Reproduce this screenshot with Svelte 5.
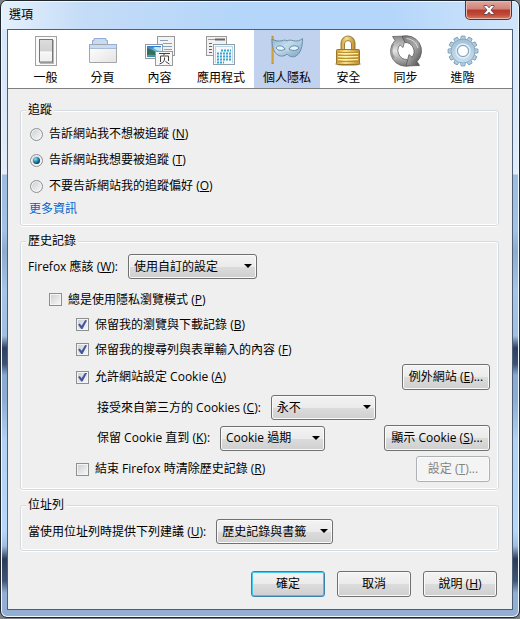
<script>
  const tabs = [
    { id: 'general', label: '一般' },
    { id: 'tabs', label: '分頁' },
    { id: 'content', label: '內容' },
    { id: 'apps', label: '應用程式' },
    { id: 'privacy', label: '個人隱私' },
    { id: 'security', label: '安全' },
    { id: 'sync', label: '同步' },
    { id: 'advanced', label: '進階' }
  ];
  const trackingOptions = [
    { value: 'no', label: '告訴網站我不想被追蹤', key: 'N' },
    { value: 'yes', label: '告訴網站我想要被追蹤', key: 'T' },
    { value: 'none', label: '不要告訴網站我的追蹤偏好', key: 'O' }
  ];
  const teeth = [0, 30, 60, 90, 120, 150, 180, 210, 240, 270, 300, 330];

  let active = $state('privacy');
  let tracking = $state('yes');
  let alwaysPrivate = $state(false);
  let keepHistory = $state(true);
  let keepForms = $state(true);
  let allowCookies = $state(true);
  let clearOnExit = $state(false);
</script>

{#snippet key(letter)}(<u>{letter}</u>){/snippet}

{#snippet icon(id)}
  <svg class="icon" width="32" height="32" viewBox="0 0 32 32" aria-hidden="true">
    {#if id === 'general'}
      <rect x="5.5" y="1.5" width="21" height="29" fill="#fafafa" stroke="#a2a2a2" />
      <rect x="10" y="5" width="14" height="24" fill="#b9b9b9" />
      <rect x="9.5" y="4.5" width="13" height="22.5" fill="url(#switch)" stroke="#777" />
      <path d="M10 17h12" stroke="#fff" />
    {:else if id === 'tabs'}
      <path d="M5.5 11V5.500H7V3.500h12v2h1.500V11z" fill="#c7dbf5" stroke="#93acd0" />
      <path d="M2.500 9.500h27v18h-27z" fill="url(#folder)" stroke="#a5a5a5" />
      <path d="M2.500 12.500v-3h3M20 9.500h9.500v3" fill="none" stroke="#93acd0" />
      <path d="M3 10h26v3H3z" fill="#c7dbf5" />
      <path d="M3 13.500h26" stroke="#a9bdd9" />
    {:else if id === 'content'}
      <rect x="13.5" y="1.5" width="17" height="19" fill="#f3f3f3" stroke="#999" />
      <path d="M16 5.500h8M19 8.500h9M16 11.500h12M20 14.500h8" stroke="#8ca1b8" />
      <rect x="1.5" y="9.5" width="17" height="14" fill="#fff" stroke="#8e9aa5" />
      <rect x="3" y="11" width="14" height="11" fill="url(#photo)" />
      <path d="M3 13c5 1 7 4 14 5v2c-5 1-9-1-14 0z" fill="#346f59" />
      <path d="M9 13c3-2 5 0 8-1v4c-3 0-5-1-8-3z" fill="#c5e8f7" />
      <rect x="11.5" y="16.5" width="17" height="14" fill="#f8f8f8" stroke="#999" />
      <path d="M15 18.500h11M20.500 18.500l-1 2M16.500 27v-6h8v5M20.500 22.500v2.500q-1 3-5 4M21.500 26.500l4 2.500" fill="none" stroke="#444" />
    {:else if id === 'apps'}
      <rect x="1.5" y="1.5" width="20" height="19" fill="#f1f1f1" stroke="#999" />
      <path d="M3 4.500h7M18 4.500h2" stroke="#999" /><path d="M10 4.500h10" stroke="#666" stroke-width="2" />
      <path d="M4 8.500h3M4 11.500h3M4 14.500h3M4 17.500h3" stroke="#666" />
      <rect x="8.5" y="9.5" width="21" height="20" fill="#f5f9fb" stroke="#8ba0ad" />
      <path d="M10 11.500h18M10.500 11v17M27.500 11v17" stroke="#bcd5e2" />
      <path d="M16 15.500h10M12 18.500h14M12 21.500h14M12 24.500h14M12 27.500h7" stroke="#39a4cf" stroke-width="2" stroke-dasharray="2 1" />
    {:else if id === 'privacy'}
      <path d="M1.500 1v28" stroke="#b78a2b" stroke-width="2" /><path d="M1 2v26" stroke="#f7c44c" stroke-width=".8" />
      <path d="M1 4c3 2 7 2.500 10 1.700 2-.7 3.500-.8 5 .2 2-1 4-1 6-.2 4 1 7 0 9.500-2.200C31.500 11 30 18 25 21c-4 2-7 0-9-2-2 2-6 3-9 1C2 17 1 10 1 4z" fill="url(#mask)" stroke="#6a8eab" />
      <path d="M5 13c1-3 7-3 9 1-3 2-7 2-9-1zM18 14c2-4 8-4 10-1-2 3-7 3-10 1z" fill="#e9f3fd" stroke="#5f8caf" />
      <path d="M16 8l-1 8h3z" fill="#c5dceb" opacity=".8" />
    {:else if id === 'security'}
      <path d="M8 17V8a7 7 0 0 1 14 0v9h-3.500V9a3.500 3.500 0 0 0-7 0v8z" fill="url(#brass)" stroke="#806525" stroke-width=".8" />
      <ellipse cx="15" cy="29" rx="13" ry="2" fill="#bbb" />
      <rect x="3.5" y="14.5" width="23" height="15" rx="1" fill="url(#brass)" stroke="#9b7625" />
      <path d="M5 17.500h20M5 20.500h20M5 23.500h20M5 26.500h20" stroke="#bb9238" /><path d="M5 18.500h20M5 21.500h20M5 24.500h20" stroke="#fff1a6" />
    {:else if id === 'sync'}
      <path d="M20 30.500A15 15 0 0 1 5 5.500L2.500 1.500 16 1l-3 11.500-3-2.700A9 9 0 0 0 17 24.500z" fill="url(#metal2)" stroke="#666" stroke-width=".8" />
      <path d="M20 30.500A15 15 0 0 1 5 5.500L2.500 1.500 16 1l-3 11.500-3-2.700A9 9 0 0 0 17 24.500z" transform="rotate(180 16 16)" fill="url(#metal)" stroke="#555" stroke-width=".8" />
      <path d="M3.500 9A14 14 0 0 0 4 23" fill="none" stroke="#666" stroke-width="1.500" opacity=".5" />
      <path d="M16.500 3.500A12.500 12.500 0 0 1 28 13" fill="none" stroke="#f4f4f4" opacity=".7" />
    {:else}
      <g fill="url(#gear)" stroke="#7ba1bd" stroke-width=".8">
        {#each teeth as angle}
          <path d="M13.500 5l.6-4h3.800l.6 4z" transform="rotate({angle} 16 16)" />
        {/each}
        <path fill-rule="evenodd" d="M16 4a12 12 0 1 0 0 24 12 12 0 0 0 0-24zm0 6.500a5.500 5.500 0 1 1 0 11 5.500 5.500 0 0 1 0-11z" />
      </g>
      <circle cx="16" cy="16" r="7" fill="none" stroke="#e2f0fa" stroke-width="1.5" />
      <circle cx="16" cy="16" r="5.5" fill="#fff" stroke="#7ba1bd" />
    {/if}
  </svg>
{/snippet}

<svg class="defs" width="0" height="0" aria-hidden="true">
  <defs>
    <linearGradient id="switch" x2="0" y2="1"><stop stop-color="#ddd" /><stop offset=".55" stop-color="#d0d0d0" /><stop offset=".57" stop-color="#f6f6f6" /><stop offset="1" stop-color="#eee" /></linearGradient>
    <linearGradient id="folder" x2="1" y2="1"><stop stop-color="#fff" /><stop offset="1" stop-color="#e4e4e4" /></linearGradient>
    <linearGradient id="photo" x2="0" y2="1"><stop stop-color="#2875cb" /><stop offset=".5" stop-color="#7cc3ed" /><stop offset="1" stop-color="#3c86a8" /></linearGradient>
    <linearGradient id="mask" x2="1" y2="1"><stop stop-color="#8fb1ca" /><stop offset=".4" stop-color="#c4dcec" /><stop offset="1" stop-color="#7da3c0" /></linearGradient>
    <linearGradient id="brass"><stop stop-color="#cf9f3a" /><stop offset=".4" stop-color="#f7e08d" /><stop offset="1" stop-color="#bd8b2d" /></linearGradient>
    <linearGradient id="metal" x2="1" y2="1"><stop stop-color="#444" /><stop offset=".5" stop-color="#aaa" /><stop offset="1" stop-color="#777" /></linearGradient>
    <linearGradient id="metal2" x2="0" y2="1"><stop stop-color="#888" /><stop offset=".5" stop-color="#e4e4e4" /><stop offset="1" stop-color="#777" /></linearGradient>
    <linearGradient id="gear" x2="0" y2="1"><stop stop-color="#a4bfd3" /><stop offset="1" stop-color="#c9dfed" /></linearGradient>
  </defs>
</svg>

<div class="window">
  <header class="titlebar">
    <h1>選項</h1>
    <button class="close" aria-label="關閉">
      <svg width="12" height="10" viewBox="0 0 12 10" aria-hidden="true">
        <path d="M1 .500h3l2 2.300L8 .500h3v1L8 5l3 3.500v1H8L6 7.200 4 9.500H1v-1L4 5 1 1.500z" fill="#fff" stroke="#4a3b46" stroke-width=".8" />
      </svg>
    </button>
  </header>

  <div class="client">
    <div class="toolbar" role="tablist">
      {#each tabs as tab (tab.id)}
        <button role="tab" class="tab" aria-selected={active === tab.id} onclick={() => (active = tab.id)}>
          {@render icon(tab.id)}
          <span>{tab.label}</span>
        </button>
      {/each}
    </div>

    <main>
      <fieldset class="tracking">
        <legend>追蹤</legend>
        {#each trackingOptions as option (option.value)}
          <label class="radio-row">
            <input type="radio" name="tracking" value={option.value} bind:group={tracking} />
            <span>{option.label} {@render key(option.key)}</span>
          </label>
        {/each}
        <a href="#more">更多資訊</a>
      </fieldset>

      <fieldset class="history">
        <legend>歷史記錄</legend>
        <div class="row">
          <label for="mode">Firefox 應該 {@render key('W')}:</label>
          <span class="dropdown mode"><select id="mode"><option>使用自訂的設定</option></select></span>
        </div>
        <div class="checks">
          <label class="check"><input type="checkbox" bind:checked={alwaysPrivate} /><span>總是使用隱私瀏覽模式 {@render key('P')}</span></label>
          <div class="nested">
            <label class="check"><input type="checkbox" bind:checked={keepHistory} /><span>保留我的瀏覽與下載記錄 {@render key('B')}</span></label>
            <label class="check"><input type="checkbox" bind:checked={keepForms} /><span>保留我的搜尋列與表單輸入的內容 {@render key('F')}</span></label>
            <div class="cookies">
              <div class="row spread">
                <label class="check"><input type="checkbox" bind:checked={allowCookies} /><span>允許網站設定 Cookie {@render key('A')}</span></label>
                <button class="push">例外網站 {@render key('E')}...</button>
              </div>
              <div class="row inset">
                <label for="third">接受來自第三方的 Cookies {@render key('C')}:</label>
                <span class="dropdown short"><select id="third"><option>永不</option></select></span>
              </div>
              <div class="row inset spread">
                <div class="row">
                  <label for="until">保留 Cookie 直到 {@render key('K')}:</label>
                  <span class="dropdown short"><select id="until"><option>Cookie 過期</option></select></span>
                </div>
                <button class="push wide">顯示 Cookie {@render key('S')}...</button>
              </div>
              <div class="row spread">
                <label class="check"><input type="checkbox" bind:checked={clearOnExit} /><span>結束 Firefox 時清除歷史記錄 {@render key('R')}</span></label>
                <button class="push" disabled={!clearOnExit}>設定 {@render key('T')}...</button>
              </div>
            </div>
          </div>
        </div>
      </fieldset>

      <fieldset class="location">
        <legend>位址列</legend>
        <div class="row">
          <label for="suggest">當使用位址列時提供下列建議 {@render key('U')}:</label>
          <span class="dropdown suggest"><select id="suggest"><option>歷史記錄與書籤</option></select></span>
        </div>
      </fieldset>

      <footer>
        <button class="push default">確定</button>
        <button class="push">取消</button>
        <button class="push">說明 {@render key('H')}</button>
      </footer>
    </main>
  </div>
</div>

<style>
  :global(body) {
    background: #7c7f84;
  }
  .defs {
    display: block;
  }
  .window,
  button,
  select {
    font: 12px/18px 'Open Sans', 'Noto Sans CJK TC', sans-serif;
    color: #000;
  }
  .window {
    box-sizing: border-box;
    padding: 0 6px 7px;
    border: 1px solid #20262e;
    border-radius: 7px;
    box-shadow: inset 0 0 0 1px #f0f8ff;
    background: linear-gradient(#d3e6fb 0, #dceafa 140px, #e4edf8 173px, #9dbce0 174px, #a3c2e5 230px, #8eabcd 250px, #a6c4e6 290px, #a0bedf 335px, #2f4160 347px, #3d5172 363px, #89a9d0 374px, #8dadd4 400px, #b3d2f4 440px, #b7d7f9 530px, #9fbddf 545px, #2c3c58 558px, #405575 580px, #92afd3 592px, #93b0d4);
  }
  .titlebar {
    display: flex;
    justify-content: space-between;
    align-items: flex-start;
    height: 28px;
    margin: 0 -5px;
    padding: 0 6px;
    border-radius: 5px 5px 0 0;
    background: linear-gradient(90deg, #e5f0fc, #c4dcf7 16%, #b4d6fa 45%, #b4d6fa 75%, #d0e5fb);
    box-shadow: inset 0 1px #eef6ff;
  }
  h1 {
    margin: 5px 0 0 1px;
    font-size: 12px;
    font-weight: 400;
    line-height: 18px;
  }
  .close {
    display: flex;
    align-items: center;
    justify-content: center;
    width: 47px;
    height: 19px;
    padding: 0;
    border: 1px solid #5b2f37;
    border-top: 0;
    border-radius: 0 0 5px 5px;
    background: linear-gradient(#e0a79d, #d08377 45%, #b5392b 50%, #c04a35 75%, #d9795e);
    box-shadow: inset 0 0 0 1px #e9b9b0;
  }
  .client {
    border: 1px solid #4b6076;
    background: #efefef;
  }
  .toolbar {
    display: flex;
    padding-left: 9px;
    border-bottom: 1px solid #808080;
    background: #fff;
  }
  .tab {
    display: flex;
    flex-direction: column;
    align-items: center;
    gap: 2px;
    min-width: 57px;
    padding: 5px 9px 2px;
    border: 0;
    background: none;
    line-height: 17px;
  }
  .tab[aria-selected='true'] {
    background: #c1d2ee;
  }
  .icon {
    display: block;
  }
  main {
    padding: 12px 13px 12px 12px;
  }
  fieldset {
    min-width: 0;
    margin: 0 0 6px;
    border: 1px solid #d3dbe1;
    border-radius: 3px;
    box-shadow: inset 0 0 0 1px #fff, 0 1px #fff;
  }
  legend {
    margin-left: -2px;
    padding: 0 2px;
    background: #efefef;
  }
  .tracking {
    padding: 2px 8px 6px;
  }
  .history {
    padding: 4px 8px 7px 7px;
  }
  .location {
    margin-bottom: 20px;
    padding: 5px 7px 6px;
  }
  .radio-row {
    display: flex;
    align-items: center;
    gap: 6px;
    width: max-content;
    height: 26px;
    padding-left: 1px;
  }
  .tracking a {
    display: block;
    width: max-content;
    line-height: 20px;
    color: #0066cc;
    text-decoration: none;
  }
  .tracking legend {
    margin-left: -3px;
  }
  input {
    display: grid;
    place-items: center;
    appearance: none;
    flex: none;
    width: 13px;
    height: 13px;
    margin: 0;
    border: 1px solid #8e8f8f;
    background: linear-gradient(135deg, #c9cdd1, #fafafa);
    box-shadow: inset 0 0 0 1px #f4f4f4;
  }
  input[type='radio'] {
    border-radius: 50%;
  }
  input[type='radio']:checked::after {
    content: '';
    width: 7px;
    height: 7px;
    border-radius: 50%;
    background: radial-gradient(circle at 35% 30%, #8ee4fa, #1d80a8 45%, #0b2c4c 80%);
  }
  input[type='checkbox']:checked::after {
    content: '';
    width: 9px;
    height: 9px;
    background: #4257a0;
    clip-path: polygon(0 50%, 20% 40%, 40% 65%, 80% 0, 100% 5%, 50% 100%, 35% 100%);
  }
  .row {
    display: flex;
    align-items: center;
    gap: 10px;
  }
  .spread {
    justify-content: space-between;
  }
  .checks {
    margin: 8px 0 0 21px;
  }
  .nested {
    margin-left: 27px;
  }
  .check {
    display: flex;
    align-items: center;
    gap: 6px;
    width: max-content;
    height: 25px;
  }
  .cookies {
    display: flex;
    flex-direction: column;
    gap: 5px;
    margin-top: 2px;
  }
  .inset {
    margin-left: 21px;
  }
  .dropdown {
    position: relative;
    display: flex;
  }
  .dropdown::after {
    content: '';
    position: absolute;
    top: 10px;
    right: 5px;
    border: 4px solid transparent;
    border-top-color: #000;
    border-bottom: 0;
    pointer-events: none;
  }
  select,
  .push {
    box-sizing: border-box;
    border: 1px solid #707070;
    border-radius: 3px;
    background: linear-gradient(#f3f3f3, #ebebeb 50%, #dcdcdc 51%, #cfcfcf);
    box-shadow: inset 0 0 0 1px #fafafa;
  }
  select {
    appearance: none;
    width: 100%;
    height: 25px;
    padding: 0 18px 0 5px;
  }
  .mode {
    width: 129px;
  }
  .short {
    width: 105px;
  }
  .suggest {
    width: 117px;
  }
  .push {
    min-width: 74px;
    height: 26px;
    padding: 0 5px;
  }
  .cookies .push {
    min-width: 88px;
  }
  .cookies .push.wide {
    min-width: 106px;
  }
  .cookies .push:disabled {
    min-width: 74px;
    border-color: #adb2b5;
    background: #f4f4f4;
    color: #838383;
  }
  .push.default {
    border-color: #3c7fb1;
    box-shadow: inset 0 0 0 1px #43c9f0;
  }
  footer {
    display: flex;
    justify-content: flex-end;
    gap: 12px;
    padding-right: 2px;
  }
</style>
